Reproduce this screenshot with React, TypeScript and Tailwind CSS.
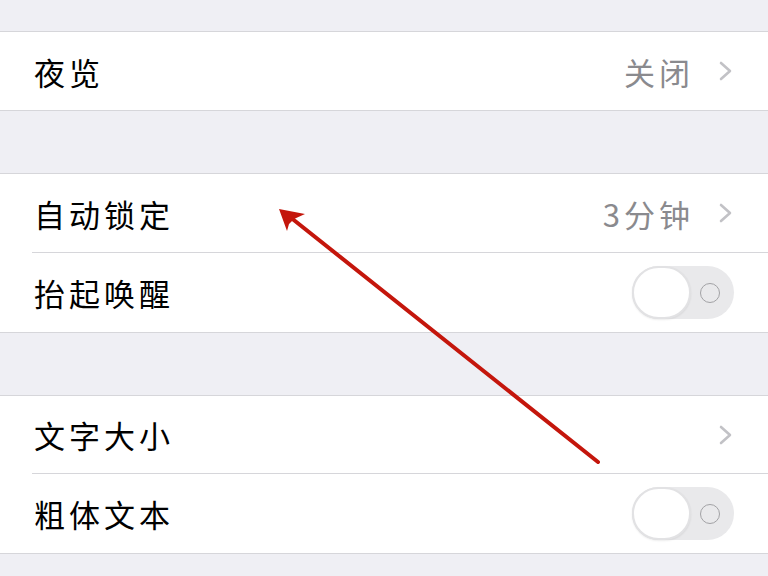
import React from "react";

const font = { fontFamily: '"Noto Sans CJK SC", "Noto Sans", sans-serif' };

function Chevron() {
  return (
    <svg width="16" height="20" viewBox="0 0 16 20" className="ml-[24px]">
      <polyline points="3,2 12,10 3,18" fill="none" stroke="#c2c2c6" strokeWidth="2.6" strokeLinecap="round" strokeLinejoin="round" />
    </svg>
  );
}

function Toggle() {
  return (
    <div className="relative w-[102px] h-[53px] rounded-full bg-[#e9e9eb] flex items-center">
      <div className="w-[59px] h-[53px] rounded-full bg-white border-2 border-[#e2e2e4] shadow-[0_1px_2px_rgba(0,0,0,0.08)]" />
      <div className="ml-[9px] w-[20px] h-[20px] rounded-full border-[1.5px] border-[#a2a2a5]" />
    </div>
  );
}

function Row({ label, value, kind, h }: { label: string; value?: string; kind: "chev" | "toggle"; h: string }) {
  return (
    <div className={`flex items-center ${h} pl-[34px] pr-[34px]`}>
      <span className="text-[31px] tracking-[4px] text-black leading-none flex-1">{label}</span>
      {value && <span className="text-[31px] tracking-[4px] text-[#8a8a8e] leading-none">{value}</span>}
      {kind === "chev" ? <Chevron /> : <Toggle />}
    </div>
  );
}

export default function App() {
  return (
    <div className="relative w-[768px] h-[576px] bg-[#efeff4] overflow-hidden" style={font}>
      <div className="h-[31px]" />
      <div className="bg-white border-y border-[#d6d6da]">
        <Row label="夜览" value="关闭" kind="chev" h="h-[78px]" />
      </div>
      <div className="h-[62px]" />
      <div className="bg-white border-y border-[#d6d6da]">
        <Row label="自动锁定" value="3分钟" kind="chev" h="h-[78px]" />
        <div className="ml-[32px] h-px bg-[#d6d6da]" />
        <Row label="抬起唤醒" kind="toggle" h="h-[79px]" />
      </div>
      <div className="h-[62px]" />
      <div className="bg-white border-y border-[#d6d6da]">
        <Row label="文字大小" kind="chev" h="h-[77px]" />
        <div className="ml-[32px] h-px bg-[#d6d6da]" />
        <Row label="粗体文本" kind="toggle" h="h-[79px]" />
      </div>
      <svg className="absolute left-0 top-0" width="768" height="576" viewBox="0 0 768 576">
        <line x1="598" y1="462" x2="285" y2="213" stroke="#c4160c" strokeWidth="4" strokeLinecap="round" />
        <polygon points="279,209 305,214 294,219 289,224 287,231" fill="#c4160c" />
      </svg>
    </div>
  );
}
